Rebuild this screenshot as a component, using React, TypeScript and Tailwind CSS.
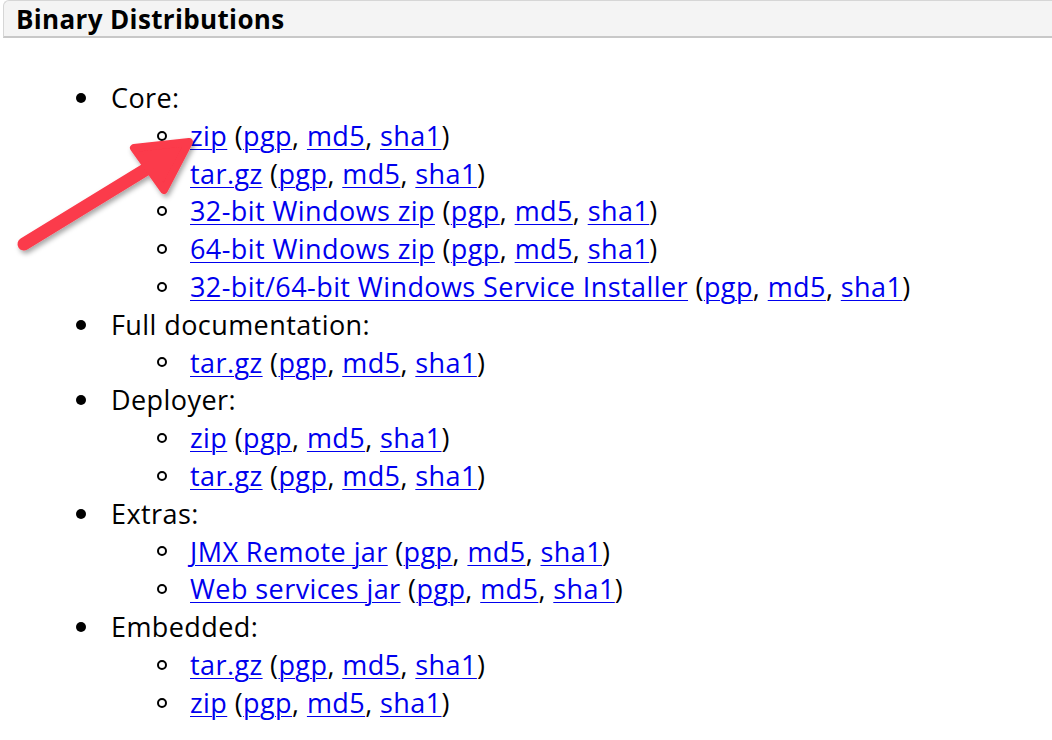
const link = 'text-[#0000ee] underline decoration-1 underline-offset-[3px]'

type Item = { name: string }

function Row({ name }: Item) {
  return (
    <li className="flex items-center">
      <span className="w-[33px] shrink-0 flex">
        <span className="w-[10px] h-[10px] rounded-full border-2 border-black" />
      </span>
      <span>
        <a href="#" className={link}>{name}</a> (
        <a href="#" className={link}>pgp</a>,{' '}
        <a href="#" className={link}>md5</a>,{' '}
        <a href="#" className={link}>sha1</a>)
      </span>
    </li>
  )
}

const groups: { title: string; items: string[] }[] = [
  {
    title: 'Core:',
    items: ['zip', 'tar.gz', '32-bit Windows zip', '64-bit Windows zip', '32-bit/64-bit Windows Service Installer'],
  },
  { title: 'Full documentation:', items: ['tar.gz'] },
  { title: 'Deployer:', items: ['zip', 'tar.gz'] },
  { title: 'Extras:', items: ['JMX Remote jar', 'Web services jar'] },
  { title: 'Embedded:', items: ['tar.gz', 'zip'] },
]

export default function App() {
  return (
    <div
      className="relative w-[1052px] h-[740px] overflow-hidden bg-white text-black"
      style={{ fontFamily: '"Open Sans", "Noto Sans", sans-serif' }}
    >
      {/* section header */}
      <div className="ml-[3px] h-[38px] bg-[#f4f4f4] border-l border-t border-[#d6d6d6] border-b-2 border-b-[#c8c8c8] rounded-tl-[6px] flex items-center pl-[12px]">
        <h3 className="text-[26px] font-bold leading-none tracking-[0.35px]">Binary Distributions</h3>
      </div>

      <ul className="mt-[41px] pl-[76px] text-[27px] leading-[37.8px] tracking-[0.42px]">
        {groups.map((g) => (
          <li key={g.title}>
            <div className="flex items-center">
              <span className="w-[35px] shrink-0 flex">
                <span className="w-[10px] h-[10px] rounded-full bg-black" />
              </span>
              <span>{g.title}</span>
            </div>
            <ul className="ml-[81px]">
              {g.items.map((i) => (
                <Row key={i} name={i} />
              ))}
            </ul>
          </li>
        ))}
      </ul>

      {/* annotation arrow */}
      <svg className="absolute left-0 top-0 pointer-events-none" width="260" height="280" viewBox="0 0 260 280">
        <defs>
          <filter id="sh" x="-20%" y="-20%" width="140%" height="140%">
            <feDropShadow dx="2" dy="3" stdDeviation="2.5" floodColor="#000" floodOpacity="0.35" />
          </filter>
        </defs>
        <g filter="url(#sh)" fill="#fb3a4b" stroke="#fb3a4b" strokeLinecap="round" strokeLinejoin="round">
          <line x1="24" y1="244" x2="176" y2="151" strokeWidth="13" />
          <path d="M134 148 L189 142 L164 190 Z" strokeWidth="8" />
        </g>
      </svg>
    </div>
  )
}
